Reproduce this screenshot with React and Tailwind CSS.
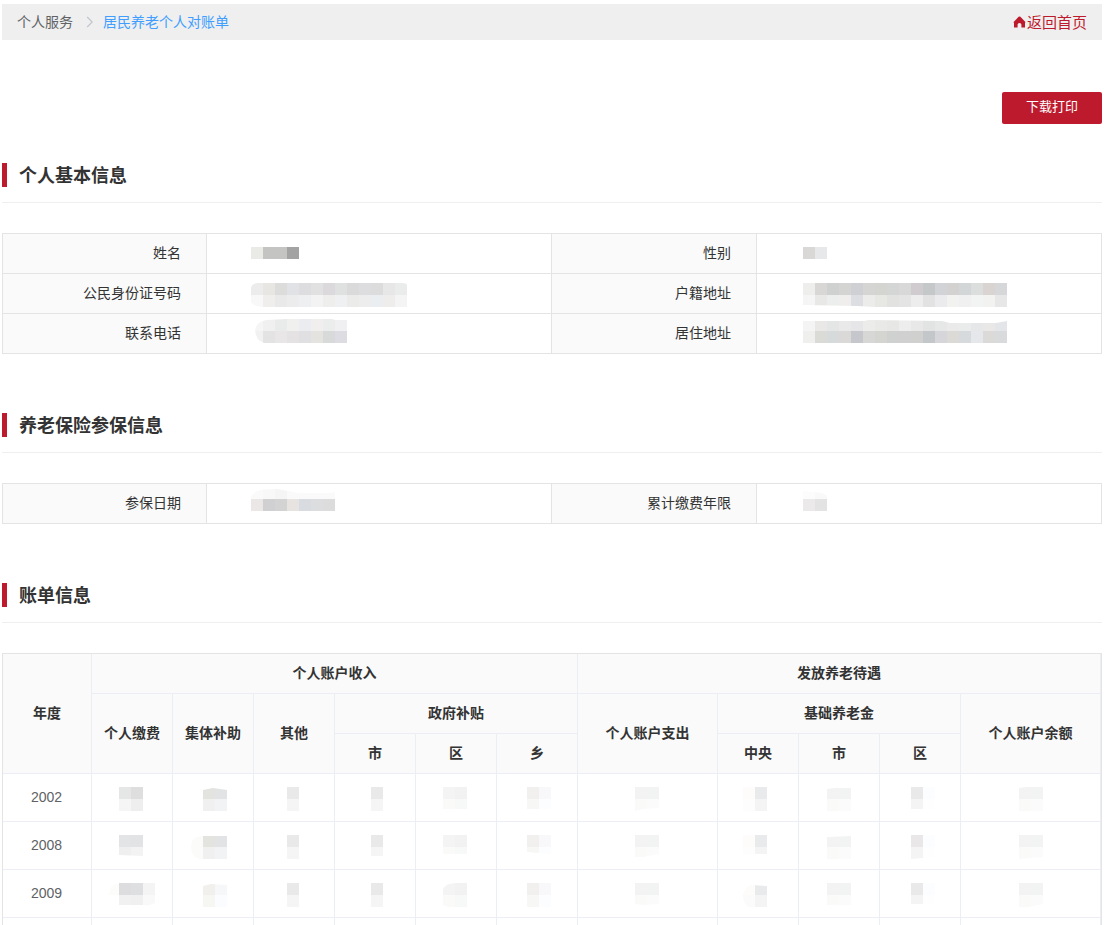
import React, { useId } from "react";

const CELL = 12;

// Masked value: a grid of 12px tiles, optionally trimmed by a path.
function Mosaic({ x, y, rows, clip }) {
  const id = useId();
  return (
    <svg className="block h-[38px] w-full" aria-hidden="true" shapeRendering="crispEdges">
      {clip && (
        <clipPath id={id}>
          <path d={clip} />
        </clipPath>
      )}
      <g clipPath={clip ? `url(#${id})` : undefined}>
        {rows.map((row, r) =>
          row.split(" ").map((c, i) => (
            <rect key={`${r}-${i}`} x={x + i * CELL} y={y + r * CELL} width={CELL} height={CELL} fill={`#${c}`} />
          ))
        )}
      </g>
    </svg>
  );
}

function SectionTitle({ children }) {
  return (
    <div className="flex h-10 items-start border-b border-[#efefef]">
      <span className="h-6 w-[5px] bg-[#be1a2d]" />
      <h2 className="ml-3 pt-px text-[18px] leading-6 font-bold text-[#333]">{children}</h2>
    </div>
  );
}

function InfoTable({ rows }) {
  return (
    <div className="mt-[30px] border-x border-t border-[#e4e4e4]">
      {rows.map((row) => (
        <div
          key={row[0].label}
          className="grid grid-cols-[204px_345px_205px_344px] grid-rows-[39px] border-b border-[#e4e4e4]"
        >
          {row.map((f, i) => (
            <React.Fragment key={f.label}>
              <div className="flex items-center justify-end border-r border-[#e4e4e4] bg-[#fafafa] pr-[25px] pb-0.5 text-sm leading-5 text-[#333]">
                {f.label}
              </div>
              <div className={i === 0 ? "border-r border-[#e4e4e4]" : ""}>
                <Mosaic {...f.value} />
              </div>
            </React.Fragment>
          ))}
        </div>
      ))}
    </div>
  );
}

const basic = [
  [
    { label: "姓名", value: { x: 44, y: 13, rows: ["eaeae7 c4c4c2 c4c4c2 a3a3a3"] } },
    { label: "性别", value: { x: 46, y: 13, rows: ["d9d8d6 e7e8ea"] } },
  ],
  [
    {
      label: "公民身份证号码",
      value: {
        x: 44,
        y: 9,
        rows: [
          "ececec e7e6e3 dcdcda e1e2e5 dddddf e1e1e1 dbd9dc dfe1e0 d9dad9 dddde0 dcdcdd e7e7e7 e9eceb",
          "f8f8f8 efeeec e9e9e9 ececec edeff1 f3f3f3 eeeeec eff0f1 ebebea ededed ebeef1 efedeb f4f4f4",
        ],
        clip: "M44 13Q46 9 51 9H194Q200 9 200 11V33H55Q46 32 44 28Z",
      },
    },
    {
      label: "户籍地址",
      value: {
        x: 46,
        y: 9,
        rows: [
          "eeeeec d9d7d6 cfd1d1 d4d4d3 cfd0d3 d5d5d3 d4d5d0 d4d6d5 d8d8d8 cfcbce c4c8c9 d2d3d6 d4d2d0 d3d6d7 dcdddd d9d4d1 d6d7d9",
          "f5f5f5 e8e8e6 eceeee f0eeec dddee1 ececeb e7e7e4 e2e2e1 e4e4e4 ededed e2e2e2 ebebee f2f2f1 eff0ef f2f4f3 f2f2f0 e7e7e7",
        ],
        clip: "M46 9H250V33H118L100 32L46 31Z",
      },
    },
  ],
  [
    {
      label: "联系电话",
      value: {
        x: 44,
        y: 5,
        rows: [
          "f5f5f5 f0f0f0 e9ebea f0f0ee ebecef f0efee ebedec f0f0f2",
          "f1f1f1 e3e3e3 e8e6e6 e4e2e3 e0e0e3 e4e3e0 d8dad9 dcdce2",
        ],
        clip: "M48 16Q50 7 60 6L80 5H125L128 6H140V29H57Q49 27 48 16Z",
      },
    },
    {
      label: "居住地址",
      value: {
        x: 46,
        y: 5,
        rows: [
          "f4f4f4 e9e8e6 e4e6e5 e9e9e9 e6e6e8 ececea e9e9e7 e7e7e6 ededed e8e8e8 e2e4e3 e6e7e7 eaeaea eaecec e5e7e9 eae8e6 e4e5e9",
          "efefed dadad7 d6dadb dad9d7 c6c7cc d7d7d5 d4d4d0 cfd1d1 d0d0d0 d0d0cf c3c7c9 d5d5da dbdad6 d6dadd e5e7ea dcdad8 d9dadc",
        ],
        clip: "M46 7H107L112 6L185 7L193 9H239L250 7V29H46Z",
      },
    },
  ],
];

const insurance = [
  [
    {
      label: "参保日期",
      value: {
        x: 44,
        y: 3,
        rows: [
          "fafafa f8f8f8 f5f5f5 fafafa fafafa fafafa fafafa",
          "ebe7e6 d0d0d2 d3d3d3 e6e3e1 d8dce1 dcdddf dddcdd",
        ],
        clip: "M44 12L50 7Q54 5 70 5L92 9H122L128 8V27H44Z",
      },
    },
    {
      label: "累计缴费年限",
      value: { x: 46, y: 3, rows: ["fcfcfc f9f9f9", "ebe9ea e3e3e3"], clip: "M46 7L65 9L70 12V27H46Z" },
    },
  ],
];

const pale = ["f3f3f3 f2f4f3", "fafaf9 fafbfa"];
const grey = ["e9e9e9", "f5f5f5"];
const town = ["f2f0ef f8f8fa", "f7f7f5 fcfdff"];
const district = ["f4f4f4 f2f2f2", "fafaf8 f7f9f8"];
const group = ["e3e3e0 e2e3e5", "f0f0f0 f2f3f5"];

const bills = [
  {
    year: "2002",
    cells: [
      { x: 27, y: 13, rows: ["e5e7e6 dedede", "f5f5f5 eeeeee"] },
      { x: 30, y: 13, rows: group, clip: "M30 16L40 14L54 16V37H30Z" },
      { x: 33, y: 13, rows: grey },
      { x: 36, y: 13, rows: grey },
      { x: 27, y: 13, rows: district, clip: "M27 13H51V35H27Z" },
      { x: 30, y: 13, rows: town, clip: "M30 13H54V35H30Z" },
      { x: 57, y: 13, rows: pale, clip: "M57 13H81V34L65 35L57 37Z" },
      { x: 25, y: 13, rows: ["fefcfa e9eaec", "fdfdfd f4f4f4"] },
      { x: 28, y: 13, rows: pale, clip: "M28 15L36 14H52V37H28Z" },
      { x: 31, y: 13, rows: ["e9e9e9 fcfdff", "f4f4f4 fefefe"], clip: "M31 13H55V35H31Z" },
      { x: 58, y: 13, rows: pale, clip: "M58 14L66 13H82V37H58Z" },
    ],
  },
  {
    year: "2008",
    cells: [
      { x: 27, y: 13, rows: ["e3e4e5 e2e3e4", "efefef f3f3f3"], clip: "M27 13H51V34L27 33Z" },
      { x: 18, y: 13, rows: ["fbfbfa e3e3e0 e2e3e5", "fbfbfa f0f0f0 f2f3f5"], clip: "M18 25Q18 14 30 14H54V37H30Q19 38 18 25Z" },
      { x: 33, y: 13, rows: grey },
      { x: 36, y: 13, rows: grey, clip: "M36 13H48V34H36Z" },
      { x: 27, y: 13, rows: district, clip: "M27 13H51V32H27Z" },
      { x: 30, y: 13, rows: town, clip: "M30 13H54V32L30 30Z" },
      { x: 57, y: 13, rows: pale, clip: "M57 13H81V32L65 35H57Z" },
      { x: 25, y: 13, rows: ["fefcfa e9eaec", "fdfdfd f4f4f4"], clip: "M25 13H49V32H25Z" },
      { x: 28, y: 13, rows: pale, clip: "M28 15L52 14V37H28Z" },
      { x: 31, y: 13, rows: ["e9e7e8 fcfdff", "f4f4f4 fefefe"], clip: "M31 13H55V35L31 37Z" },
      { x: 58, y: 13, rows: pale, clip: "M58 13H82V35L58 37Z" },
    ],
  },
  {
    year: "2009",
    cells: [
      { x: 15, y: 13, rows: ["fcfcfb dddddf dedfe0 f3f4f3", "ffffff f1f1f1 f0f0f0 f8f9f8"], clip: "M17 25Q18 14 27 13H63V33L58 35H27V25Z" },
      { x: 30, y: 13, rows: ["f2f0ed f6f7f9", "f6f6f3 fafcff"], clip: "M30 16L38 14L54 15V37H30Z" },
      { x: 33, y: 13, rows: grey },
      { x: 36, y: 13, rows: grey },
      { x: 27, y: 13, rows: district, clip: "M27 19Q30 13 40 13H51V37H32L27 35Z" },
      { x: 30, y: 13, rows: town },
      { x: 57, y: 13, rows: pale, clip: "M57 13H81V34L65 35L57 34Z" },
      { x: 25, y: 13, rows: ["fefcfa e9eaec", "fbfbfb f4f4f4"], clip: "M25 25Q27 16 34 15L49 16V37H31Q25 34 25 25Z" },
      { x: 28, y: 13, rows: pale, clip: "M28 13H52V35H28Z" },
      { x: 31, y: 13, rows: ["e9e9e9 fcfdff", "f4f4f4 fefefe"], clip: "M31 13H55V34H31Z" },
      { x: 58, y: 13, rows: pale, clip: "M58 13H82V34L67 37H58Z" },
    ],
  },
];

function Th({ className = "", children }) {
  return (
    <div
      className={`flex items-center justify-center border-r border-b border-[#ebeef5] bg-[#fafafa] pb-0.5 text-sm leading-5 font-bold text-[#333] ${className}`}
    >
      {children}
    </div>
  );
}

export default function App() {
  return (
    <div className="h-[925px] w-[1106px] overflow-hidden bg-white pt-1 pr-1 pl-0.5 font-['Liberation_Sans','Noto_Sans_CJK_SC',sans-serif]">
      <header className="flex h-9 items-center justify-between bg-[#efefef] px-[15px] text-sm">
        <nav className="flex items-center">
          <span className="text-[#606266]">个人服务</span>
          <svg className="mr-[9px] ml-[13px] h-3 w-2" viewBox="0 0 8 12" fill="none" stroke="#c0c4cc" strokeWidth="1.1">
            <path d="M1.2 1L6.2 6L1.2 11" />
          </svg>
          <span className="text-[#409eff]">居民养老个人对账单</span>
        </nav>
        <a className="flex items-center pt-px text-[15px] text-[#be1a2d]">
          <svg className="mr-px mb-px h-3 w-[13px]" viewBox="0 0 13 12" fill="currentColor">
            <path d="M6.5 .4Q7 .4 7.4 .8L12.4 6Q12.7 6.7 12 6.8V11.4H8.4V8.6Q8.4 7 6.5 7T4.6 8.6V11.4H1V6.8Q.3 6.7 .6 6L5.6 .8Q6 .4 6.5 .4Z" />
          </svg>
          返回首页
        </a>
      </header>

      <div className="mt-[52px] flex justify-end">
        <button className="h-8 w-[100px] rounded-[2px] bg-[#be1a2d] pb-0.5 text-[13px] text-white">下载打印</button>
      </div>

      <section className="mt-[39px]">
        <SectionTitle>个人基本信息</SectionTitle>
        <InfoTable rows={basic} />
      </section>

      <section className="mt-[59px]">
        <SectionTitle>养老保险参保信息</SectionTitle>
        <InfoTable rows={insurance} />
      </section>

      <section className="mt-[59px]">
        <SectionTitle>账单信息</SectionTitle>
        <div className="mt-[30px] border border-b-0 border-[#e4e4e4]">
          <div className="grid grid-cols-[89px_repeat(6,81px)_140px_repeat(3,81px)_140px] grid-rows-[repeat(3,40px)]">
            <Th className="row-span-3">年度</Th>
            <Th className="col-span-6">个人账户收入</Th>
            <Th className="col-span-5">发放养老待遇</Th>
            <Th className="row-span-2">个人缴费</Th>
            <Th className="row-span-2">集体补助</Th>
            <Th className="row-span-2">其他</Th>
            <Th className="col-span-3">政府补贴</Th>
            <Th className="row-span-2">个人账户支出</Th>
            <Th className="col-span-3">基础养老金</Th>
            <Th className="row-span-2">个人账户余额</Th>
            <Th>市</Th>
            <Th>区</Th>
            <Th>乡</Th>
            <Th>中央</Th>
            <Th>市</Th>
            <Th>区</Th>
          </div>
          {[...bills, { year: "", cells: Array(11).fill(null) }].map((b, i) => (
            <div
              key={i}
              className="grid grid-cols-[89px_repeat(6,81px)_140px_repeat(3,81px)_140px] grid-rows-[48px]"
            >
              <div className="flex items-center justify-center border-r border-b border-[#ebeef5] pr-px pb-0.5 text-sm text-[#606266]">
                {b.year}
              </div>
              {b.cells.map((c, j) => (
                <div key={j} className="border-r border-b border-[#ebeef5]">
                  {c && <Mosaic {...c} />}
                </div>
              ))}
            </div>
          ))}
        </div>
      </section>
    </div>
  );
}
